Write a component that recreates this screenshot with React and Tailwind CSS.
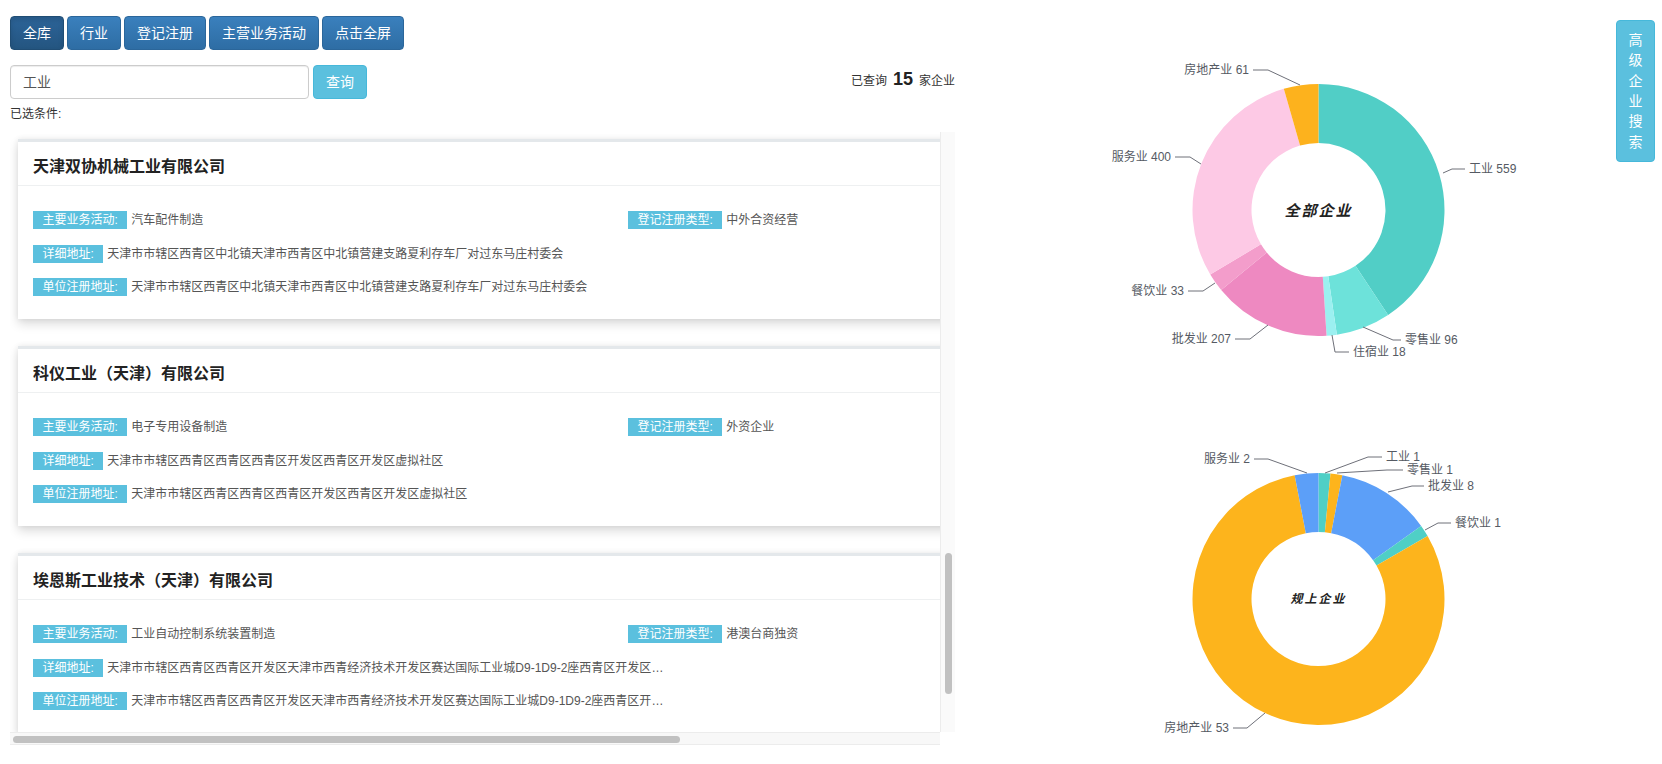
import React from 'react';

const FONT = '"Liberation Sans", "Noto Sans CJK SC", sans-serif';

const companies = [
  {
    name: '天津双协机械工业有限公司',
    activity: '汽车配件制造',
    regType: '中外合资经营',
    address: '天津市市辖区西青区中北镇天津市西青区中北镇营建支路夏利存车厂对过东马庄村委会',
    regAddress: '天津市市辖区西青区中北镇天津市西青区中北镇营建支路夏利存车厂对过东马庄村委会',
  },
  {
    name: '科仪工业（天津）有限公司',
    activity: '电子专用设备制造',
    regType: '外资企业',
    address: '天津市市辖区西青区西青区西青区开发区西青区开发区虚拟社区',
    regAddress: '天津市市辖区西青区西青区西青区开发区西青区开发区虚拟社区',
  },
  {
    name: '埃恩斯工业技术（天津）有限公司',
    activity: '工业自动控制系统装置制造',
    regType: '港澳台商独资',
    address: '天津市市辖区西青区西青区开发区天津市西青经济技术开发区赛达国际工业城D9-1D9-2座西青区开发区虚拟社区',
    regAddress: '天津市市辖区西青区西青区开发区天津市西青经济技术开发区赛达国际工业城D9-1D9-2座西青区开发区虚拟社区',
  },
];

// all enterprises, clockwise from 12 o'clock
const allData = [
  { name: '工业', value: 559, color: '#51cec6' },
  { name: '零售业', value: 96, color: '#6de2da' },
  { name: '住宿业', value: 18, color: '#9bf0f0' },
  { name: '批发业', value: 207, color: '#ee89c1' },
  { name: '餐饮业', value: 33, color: '#f39dcb' },
  { name: '服务业', value: 400, color: '#fdc9e5' },
  { name: '房地产业', value: 61, color: '#fdb21d' },
];

const bigData = [
  { name: '工业', value: 1, color: '#4fcfc6' },
  { name: '零售业', value: 1, color: '#fdb41c' },
  { name: '批发业', value: 8, color: '#5c9ff8' },
  { name: '餐饮业', value: 1, color: '#4fcfc6' },
  { name: '房地产业', value: 53, color: '#fdb41c' },
  { name: '服务业', value: 2, color: '#5c9ff8' },
];

// label positions in page coords: leader line points + text anchor
const allLabels = [
  { text: '房地产业 61', pts: [[1300, 85], [1268, 70], [1253, 70]], x: 1249, y: 70, anchor: 'end' },
  { text: '服务业 400', pts: [[1201, 164], [1190, 157], [1175, 157]], x: 1171, y: 157, anchor: 'end' },
  { text: '餐饮业 33', pts: [[1215, 283], [1203, 291], [1188, 291]], x: 1184, y: 291, anchor: 'end' },
  { text: '批发业 207', pts: [[1268, 325], [1250, 339], [1235, 339]], x: 1231, y: 339, anchor: 'end' },
  { text: '住宿业 18', pts: [[1332, 335], [1335, 352], [1349, 352]], x: 1353, y: 352, anchor: 'start' },
  { text: '零售业 96', pts: [[1363, 327], [1393, 340], [1401, 340]], x: 1405, y: 340, anchor: 'start' },
  { text: '工业 559', pts: [[1443, 173], [1452, 169], [1465, 169]], x: 1469, y: 169, anchor: 'start' },
];

const bigLabels = [
  { text: '服务业 2', pts: [[1307, 473], [1268, 459], [1254, 459]], x: 1250, y: 459, anchor: 'end' },
  { text: '工业 1', pts: [[1325, 473], [1368, 457], [1382, 457]], x: 1386, y: 457, anchor: 'start' },
  { text: '零售业 1', pts: [[1337, 473], [1387, 470], [1403, 470]], x: 1407, y: 470, anchor: 'start' },
  { text: '批发业 8', pts: [[1388, 492], [1412, 486], [1424, 486]], x: 1428, y: 486, anchor: 'start' },
  { text: '餐饮业 1', pts: [[1425, 530], [1438, 523], [1451, 523]], x: 1455, y: 523, anchor: 'start' },
  { text: '房地产业 53', pts: [[1265, 713], [1247, 728], [1233, 728]], x: 1229, y: 728, anchor: 'end' },
];

function arcPath(cx, cy, r0, r1, a0, a1) {
  const pt = (r, a) => {
    const rad = (a * Math.PI) / 180;
    return [cx + r * Math.sin(rad), cy - r * Math.cos(rad)];
  };
  const large = a1 - a0 > 180 ? 1 : 0;
  const [x1, y1] = pt(r1, a0);
  const [x2, y2] = pt(r1, a1);
  const [x3, y3] = pt(r0, a1);
  const [x4, y4] = pt(r0, a0);
  return `M${x1} ${y1} A${r1} ${r1} 0 ${large} 1 ${x2} ${y2} L${x3} ${y3} A${r0} ${r0} 0 ${large} 0 ${x4} ${y4} Z`;
}

function Donut({ data, labels, title, titleSize, top, height }) {
  const cx = 343.5;
  const cy = 194;
  const total = data.reduce((s, d) => s + d.value, 0);
  let acc = 0;
  const offX = 975;
  return (
    <svg width="687" height={height} className="block">
      {data.map((d) => {
        const a0 = (acc / total) * 360;
        acc += d.value;
        const a1 = (acc / total) * 360;
        return <path key={d.name} d={arcPath(cx, cy, 67, 126, a0, a1)} fill={d.color} />;
      })}
      {labels.map((l) => (
        <g key={l.text}>
          <polyline
            points={l.pts.map(([x, y]) => `${x - offX},${y - top}`).join(' ')}
            fill="none"
            stroke="#6e7079"
            strokeWidth="1"
          />
          <text
            x={l.x - offX}
            y={l.y - top}
            textAnchor={l.anchor}
            dominantBaseline="central"
            fontSize="12"
            fill="#555a63"
            style={{ fontFamily: FONT }}
          >
            {l.text}
          </text>
        </g>
      ))}
      <text
        x={cx}
        y={cy}
        textAnchor="middle"
        dominantBaseline="central"
        fontSize={titleSize}
        fontWeight="bold"
        fontStyle="italic"
        letterSpacing="2"
        fill="#222"
        style={{ fontFamily: FONT }}
      >
        {title}
      </text>
    </svg>
  );
}

function Tag({ children }) {
  return (
    <span className="shrink-0 bg-[#5bc0de] text-white text-xs leading-[18px] h-[18px] px-[9.5px] whitespace-nowrap">
      {children}
    </span>
  );
}

function CompanyCard({ c }) {
  return (
    <div className="w-[1220px] bg-white border-t-[3px] border-[#e4e8eb] shadow-[0_5px_10px_rgba(0,0,0,0.14),0_0_6px_rgba(0,0,0,0.07)] mb-[27px]">
      <div className="h-[44px] px-[15px] pt-[6px] flex items-center border-b border-[#eef0f1] text-base font-bold text-[#222]">
        {c.name}
      </div>
      <div className="px-[15px] pt-[25px] pb-[23px] flex flex-col gap-[15.5px] text-xs text-[#555]">
        <div className="flex items-center h-[18px]">
          <div className="w-[595px] flex items-center gap-1">
            <Tag>主要业务活动:</Tag>
            <span>{c.activity}</span>
          </div>
          <div className="flex items-center gap-1">
            <Tag>登记注册类型:</Tag>
            <span>{c.regType}</span>
          </div>
        </div>
        <div className="w-[642px] flex items-center gap-1 h-[18px]">
          <Tag>详细地址:</Tag>
          <span className="min-w-0 flex-1 truncate">{c.address}</span>
        </div>
        <div className="w-[642px] flex items-center gap-1 h-[18px]">
          <Tag>单位注册地址:</Tag>
          <span className="min-w-0 flex-1 truncate">{c.regAddress}</span>
        </div>
      </div>
    </div>
  );
}

export default function App() {
  const navBtns = ['全库', '行业', '登记注册', '主营业务活动', '点击全屏'];

  return (
    <div className="relative w-[1662px] h-[764px] bg-white overflow-hidden text-[#333]" style={{ fontFamily: FONT }}>
      <div className="flex">
        {/* Left: search + list */}
        <div className="ml-[10px] w-[945px] pt-4 flex flex-col">
          <div className="flex gap-[3px]">
            {navBtns.map((b, i) => (
              <button
                key={b}
                className={
                  i === 0
                    ? 'h-[34px] px-3 rounded text-sm text-white border border-[#204d74] bg-linear-to-b from-[#2c6499] to-[#245580] shadow-[inset_0_3px_5px_rgba(0,0,0,0.125)]'
                    : 'h-[34px] px-3 rounded text-sm text-white border border-[#2b669a] bg-linear-to-b from-[#3a80bd] to-[#2e6da4]'
                }
              >
                {b}
              </button>
            ))}
          </div>

          <div className="mt-[15px] flex items-center">
            <div className="w-[299px] h-[34px] rounded border border-[#ccc] px-3 flex items-center text-sm text-[#555] shadow-[inset_0_1px_1px_rgba(0,0,0,0.075)]">
              工业
            </div>
            <button className="ml-1 h-[34px] px-3 rounded text-sm text-white bg-[#5bc0de] border border-[#46b8da]">
              查询
            </button>
            <div className="ml-auto -mt-[7px] flex items-baseline text-xs text-[#333]">
              <span>已查询</span>
              <span className="mx-[6px] text-lg font-bold text-[#222]">15</span>
              <span>家企业</span>
            </div>
          </div>

          <div className="mt-[7px] text-xs leading-[17px] text-[#333]">已选条件:</div>

          {/* list with scrollbars */}
          <div className="mt-[9px] flex flex-col">
            <div className="flex h-[600px]">
              <div className="w-[930px] overflow-hidden pl-[8px] pt-[7px]">
                {companies.map((c) => (
                  <CompanyCard key={c.name} c={c} />
                ))}
              </div>
              <div className="w-[15px] bg-[#fafafa] border-l border-[#ececec]">
                <div className="mt-[421px] ml-[4px] w-[7px] h-[141px] rounded-full bg-[#c1c1c1]" />
              </div>
            </div>
            <div className="w-[930px] h-[13px] bg-[#f8f8f8] border-t border-b border-[#ececec]">
              <div className="ml-[3px] mt-[3px] w-[667px] h-[7px] rounded-full bg-[#c1c1c1]" />
            </div>
          </div>
        </div>

        {/* Right: charts */}
        <div className="ml-[20px] w-[687px] pt-4 flex flex-col">
          <Donut data={allData} labels={allLabels} title="全部企业" titleSize={15} top={16} height={389} />
          <Donut data={bigData} labels={bigLabels} title="规上企业" titleSize={12} top={405} height={359} />
        </div>
      </div>

      {/* floating advanced search */}
      <button className="absolute top-[20px] right-[7px] w-[39px] h-[142px] rounded bg-[#5bc0de] border border-[#46b8da] text-white text-sm leading-[20.4px] flex flex-col items-center justify-center">
        {'高级企业搜索'.split('').map((ch) => (
          <span key={ch}>{ch}</span>
        ))}
      </button>
    </div>
  );
}
